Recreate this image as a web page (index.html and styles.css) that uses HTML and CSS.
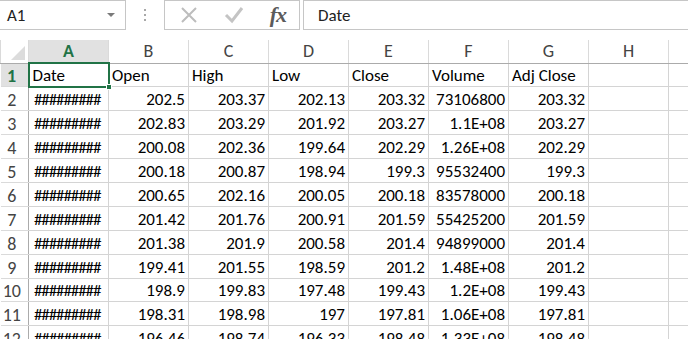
FILE: index.html
```html
<!DOCTYPE html>
<html lang="en">
<head>
    <meta charset="UTF-8">
    <title>Libro1 - Excel</title>
    <link rel="stylesheet" href="styles.css">
</head>
<body>

    <div class="barra">
        <div class="nombre">
            <span>A1</span>
            <span class="flecha"></span>
        </div>
        <div class="puntos"><i></i><i></i><i></i></div>
        <div class="botones">
            <svg width="18" height="18" viewBox="0 0 18 18"><path d="M2 2 L16 16 M16 2 L2 16" stroke="#bdbdbd" stroke-width="2" fill="none"/></svg>
            <svg width="20" height="18" viewBox="0 0 20 18"><path d="M2 9 L8 15 L18 2" stroke="#c4c4c4" stroke-width="3" fill="none"/></svg>
            <span class="fx">fx</span>
        </div>
        <div class="formula">Date</div>
    </div>

    <table class="hoja">
        <colgroup>
            <col class="c-fila">
            <col><col><col><col><col><col><col><col><col>
        </colgroup>
        <thead>
            <tr>
                <th class="esquina"><span class="triangulo"></span></th>
                <th class="activa">A</th><th>B</th><th>C</th><th>D</th><th>E</th><th>F</th><th>G</th><th>H</th><th></th>
            </tr>
        </thead>
        <tbody>
            <tr>
                <th class="activa">1</th>
                <td class="sel">Date<span class="asa"></span></td><td>Open</td><td>High</td><td>Low</td><td>Close</td><td>Volume</td><td>Adj Close</td><td></td><td></td>
            </tr>
            <tr><th>2</th><td class="h">#########</td><td class="n">202.5</td><td class="n">203.37</td><td class="n">202.13</td><td class="n">203.32</td><td class="n">73106800</td><td class="n">203.32</td><td></td><td></td></tr>
            <tr><th>3</th><td class="h">#########</td><td class="n">202.83</td><td class="n">203.29</td><td class="n">201.92</td><td class="n">203.27</td><td class="n">1.1E+08</td><td class="n">203.27</td><td></td><td></td></tr>
            <tr><th>4</th><td class="h">#########</td><td class="n">200.08</td><td class="n">202.36</td><td class="n">199.64</td><td class="n">202.29</td><td class="n">1.26E+08</td><td class="n">202.29</td><td></td><td></td></tr>
            <tr><th>5</th><td class="h">#########</td><td class="n">200.18</td><td class="n">200.87</td><td class="n">198.94</td><td class="n">199.3</td><td class="n">95532400</td><td class="n">199.3</td><td></td><td></td></tr>
            <tr><th>6</th><td class="h">#########</td><td class="n">200.65</td><td class="n">202.16</td><td class="n">200.05</td><td class="n">200.18</td><td class="n">83578000</td><td class="n">200.18</td><td></td><td></td></tr>
            <tr><th>7</th><td class="h">#########</td><td class="n">201.42</td><td class="n">201.76</td><td class="n">200.91</td><td class="n">201.59</td><td class="n">55425200</td><td class="n">201.59</td><td></td><td></td></tr>
            <tr><th>8</th><td class="h">#########</td><td class="n">201.38</td><td class="n">201.9</td><td class="n">200.58</td><td class="n">201.4</td><td class="n">94899000</td><td class="n">201.4</td><td></td><td></td></tr>
            <tr><th>9</th><td class="h">#########</td><td class="n">199.41</td><td class="n">201.55</td><td class="n">198.59</td><td class="n">201.2</td><td class="n">1.48E+08</td><td class="n">201.2</td><td></td><td></td></tr>
            <tr><th>10</th><td class="h">#########</td><td class="n">198.9</td><td class="n">199.83</td><td class="n">197.48</td><td class="n">199.43</td><td class="n">1.2E+08</td><td class="n">199.43</td><td></td><td></td></tr>
            <tr><th>11</th><td class="h">#########</td><td class="n">198.31</td><td class="n">198.98</td><td class="n">197</td><td class="n">197.81</td><td class="n">1.06E+08</td><td class="n">197.81</td><td></td><td></td></tr>
            <tr><th>12</th><td class="h">#########</td><td class="n">196.46</td><td class="n">198.74</td><td class="n">196.33</td><td class="n">198.48</td><td class="n">1.33E+08</td><td class="n">198.48</td><td></td><td></td></tr>
        </tbody>
    </table>

</body>
</html>
```
FILE: styles.css
```css
* {
    box-sizing: border-box;
}
body {
    margin: 0;
    overflow: hidden;
    background: #fff;
    font-family: Calibri, Carlito, "Liberation Sans", sans-serif;
    color: #000;
}

/* barra de formulas */
.barra {
    display: flex;
    align-items: stretch;
    height: 30px;
    margin-bottom: 10px;
}
.nombre {
    width: 127px;
    margin-left: -1px;
    border: 1px solid #c6c6c6;
    display: flex;
    align-items: center;
    justify-content: space-between;
    padding: 0 10px 0 7px;
    font-size: 17px;
    color: #222;
}
.flecha {
    width: 0;
    height: 0;
    border-left: 4px solid transparent;
    border-right: 4px solid transparent;
    border-top: 4px solid #7a7a7a;
}
.puntos {
    width: 38px;
    display: flex;
    flex-direction: column;
    align-items: center;
    justify-content: center;
    gap: 3px;
}
.puntos i {
    width: 2px;
    height: 2px;
    background: #a8a8a8;
}
.botones {
    width: 136px;
    border: 1px solid #c6c6c6;
    display: flex;
    align-items: center;
    justify-content: space-between;
    padding: 0 13px 0 15px;
}
.fx {
    font-family: "Liberation Serif", serif;
    font-style: italic;
    font-weight: bold;
    font-size: 22px;
    color: #5b5b5b;
    letter-spacing: -1px;
}
.formula {
    flex: 1;
    margin-left: 3px;
    margin-right: -2px;
    border: 1px solid #c6c6c6;
    display: flex;
    align-items: center;
    padding-left: 14px;
    font-size: 17px;
    color: #222;
}

/* hoja */
.hoja {
    border-collapse: collapse;
    table-layout: fixed;
    width: 748px;
    font-size: 17px;
}
.hoja col {
    width: 80px;
}
.hoja col.c-fila {
    width: 28px;
}
.hoja thead th {
    height: 23px;
    font-weight: normal;
    font-size: 18px;
    color: #444;
    border-left: 1px solid #dadada;
    border-right: 1px solid #dadada;
    border-bottom: 1px solid #ababab;
    padding: 0;
}
.hoja thead th.activa {
    background: #e1e1e1;
    color: #217346;
    font-weight: bold;
    border-bottom: 2px solid #217346;
}
.esquina {
    position: relative;
}
.triangulo {
    position: absolute;
    right: 3px;
    bottom: 3px;
    width: 0;
    height: 0;
    border-left: 14px solid transparent;
    border-bottom: 14px solid #dcdcdc;
}
.hoja tbody th {
    height: 23.9px;
    font-weight: normal;
    font-size: 18px;
    color: #444;
    text-align: center;
    vertical-align: bottom;
    line-height: 20px;
    padding: 0 5px 0 0;
    border-right: 1px solid #ababab;
    border-bottom: 1px solid #dadada;
}
.hoja tbody th.activa {
    background: #e1e1e1;
    color: #217346;
    font-weight: bold;
    border-right: 2px solid #217346;
}
.hoja td {
    border: 1px solid #d4d4d4;
    padding: 0 3px;
    vertical-align: bottom;
    line-height: 20px;
    white-space: nowrap;
    overflow: hidden;
}
.hoja td.n {
    text-align: right;
}
.hoja td.h {
    padding-left: 5px;
    letter-spacing: -1.1px;
}
.hoja td.sel {
    position: relative;
    overflow: visible;
    outline: 2px solid #217346;
    outline-offset: -1px;
}
.asa {
    position: absolute;
    right: -4px;
    bottom: -4px;
    width: 6px;
    height: 6px;
    background: #217346;
    border: 1px solid #fff;
}
```
